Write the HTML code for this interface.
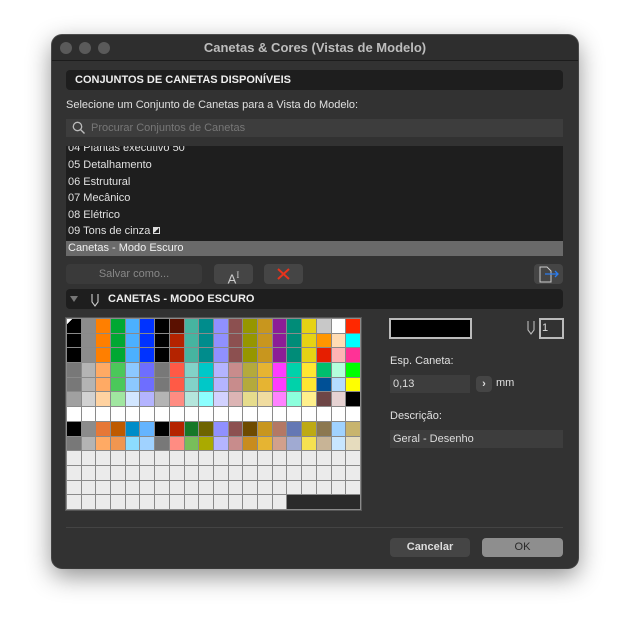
<!DOCTYPE html>
<html><head><meta charset="utf-8"><style>
*{box-sizing:border-box;margin:0;padding:0}
body{width:630px;height:637px;background:#fff;font-family:"Liberation Sans",sans-serif;position:relative;overflow:hidden}
.win{position:absolute;left:52px;top:35px;width:526px;height:533px;background:#323232;border-radius:10px;box-shadow:0 8px 25px rgba(0,0,0,.45),0 0 0 1px #555;overflow:hidden}
.tb{position:absolute;left:0;top:0;width:526px;height:26px;background:#2e2e2e;border-bottom:1px solid #1c1c1c;color:#bdbdbd;font-size:13px;font-weight:bold;text-align:center;line-height:25px}
.dot{position:absolute;top:7px;width:12px;height:12px;border-radius:50%;background:#5a5a5a}
.a{position:absolute}
.hdr{position:absolute;left:14px;width:497px;height:20px;background:#1e1e1e;border-radius:4px;color:#eee;font-size:11px;font-weight:bold;line-height:20px}
.t{position:absolute;color:#e0e0e0;font-size:11px;white-space:nowrap}
.in{position:absolute;background:#3d3d3d;color:#ddd;font-size:11px;line-height:18px;padding-left:3px}
.btn{position:absolute;background:#454545;border-radius:4px;color:#ddd;font-size:11px;text-align:center}
.grid{position:absolute;left:14px;top:283px;width:295px;height:192px;background:#8a8a8a;display:grid;grid-template-columns:repeat(20,1fr);grid-template-rows:repeat(13,1fr);gap:1px;padding:1px;outline:1px solid #555}
.grid i{display:block}
</style></head><body>
<div class="win">
<div class="tb">Canetas &amp; Cores (Vistas de Modelo)</div>
<div class="dot" style="left:8px"></div><div class="dot" style="left:27px"></div><div class="dot" style="left:46px"></div>
<div class="hdr" style="top:35px;padding-left:9px">CONJUNTOS DE CANETAS DISPONÍVEIS</div>
<div class="t" style="left:14px;top:64px">Selecione um Conjunto de Canetas para a Vista do Modelo:</div>
<div class="in" style="left:14px;top:84px;width:497px;height:18px;color:#777;padding-left:25px">Procurar Conjuntos de Canetas</div>
<svg class="a" style="left:20px;top:86px" width="14" height="14"><circle cx="5.5" cy="5.5" r="4.2" fill="none" stroke="#bbb" stroke-width="1.3"/><path d="M8.6 8.6L12.5 12.5" stroke="#bbb" stroke-width="1.4"/></svg>
<div class="a" style="left:14px;top:111px;width:497px;height:110px;background:#1e1e1e;overflow:hidden">
<div class="t" style="left:2px;top:-4px">04 Plantas executivo 50</div>
<div class="t" style="left:2px;top:13px">05 Detalhamento</div>
<div class="t" style="left:2px;top:30px">06 Estrutural</div>
<div class="t" style="left:2px;top:46px">07 Mecânico</div>
<div class="t" style="left:2px;top:63px">08 Elétrico</div>
<div class="t" style="left:2px;top:79px">09 Tons de cinza <span style="display:inline-block;width:7px;height:7px;border:1px solid #ddd;background:linear-gradient(135deg,#ddd 50%,#1e1e1e 50%);vertical-align:0"></span></div>
<div class="a" style="left:0;top:95px;width:497px;height:15px;background:#6a6a6a"></div>
<div class="t" style="left:2px;top:96px;color:#f0f0f0">Canetas - Modo Escuro</div>
</div>
<div class="btn" style="left:14px;top:229px;width:136px;height:20px;background:#3a3a3a;color:#888;line-height:20px">Salvar como...</div>
<div class="btn" style="left:162px;top:229px;width:39px;height:20px;font-size:13px;line-height:22px;color:#ccc">A<sup style="font-size:9px;font-family:'Liberation Serif'">I</sup></div>
<div class="btn" style="left:212px;top:229px;width:39px;height:20px"><svg width="39" height="20"><path d="M14 5L25 15M25 5L14 15" stroke="#e8331c" stroke-width="2"/></svg></div>
<div class="btn" style="left:482px;top:229px;width:29px;height:20px"><svg width="29" height="20"><path d="M6 3h7l4 4v11H6z" fill="none" stroke="#ccc" stroke-width="1"/><path d="M11 10h13M21 7l3 3-3 3" fill="none" stroke="#2a7cf0" stroke-width="1.3"/></svg></div>
<div class="hdr" style="top:254px;padding-left:42px">CANETAS - MODO ESCURO</div>
<svg class="a" style="left:18px;top:258px" width="40" height="14"><path d="M0 3h8L4 9z" fill="#777"/><path d="M22 1v8l3 4 3-4V1" fill="none" stroke="#ccc" stroke-width="1.1"/></svg>
<div class="grid">
<i style="background:linear-gradient(135deg,#fff 18%,#000 18%)"></i><i style="background:#8c8c8c"></i><i style="background:#ff7f00"></i><i style="background:#00a833"></i><i style="background:#4cb0ff"></i><i style="background:#0033ff"></i><i style="background:#000"></i><i style="background:#5a1000"></i><i style="background:#46b4a0"></i><i style="background:#008c8c"></i><i style="background:#9090ff"></i><i style="background:#8c5050"></i><i style="background:#969600"></i><i style="background:#c8961e"></i><i style="background:#8c1e96"></i><i style="background:#008c78"></i><i style="background:#e6d214"></i><i style="background:#c8c8c8"></i><i style="background:#fff"></i><i style="background:#ff2800"></i>
<i style="background:#000"></i><i style="background:#8c8c8c"></i><i style="background:#ff7f00"></i><i style="background:#00a833"></i><i style="background:#4cb0ff"></i><i style="background:#0033ff"></i><i style="background:#000"></i><i style="background:#b42300"></i><i style="background:#46b4a0"></i><i style="background:#008c8c"></i><i style="background:#9090ff"></i><i style="background:#8c5050"></i><i style="background:#969600"></i><i style="background:#c8961e"></i><i style="background:#8c1e96"></i><i style="background:#008c78"></i><i style="background:#e6d214"></i><i style="background:#ff9600"></i><i style="background:#ffdcb4"></i><i style="background:#00ffff"></i>
<i style="background:#000"></i><i style="background:#8c8c8c"></i><i style="background:#ff7f00"></i><i style="background:#00a833"></i><i style="background:#4cb0ff"></i><i style="background:#0033ff"></i><i style="background:#000"></i><i style="background:#b42300"></i><i style="background:#46b4a0"></i><i style="background:#008c8c"></i><i style="background:#9090ff"></i><i style="background:#8c5050"></i><i style="background:#969600"></i><i style="background:#c8961e"></i><i style="background:#8c1e96"></i><i style="background:#008c78"></i><i style="background:#e6d214"></i><i style="background:#e61e00"></i><i style="background:#ffb4b4"></i><i style="background:#ff3296"></i>
<i style="background:#787878"></i><i style="background:#b4b4b4"></i><i style="background:#ffaa64"></i><i style="background:#4bc85a"></i><i style="background:#8cc8ff"></i><i style="background:#6e6eff"></i><i style="background:#787878"></i><i style="background:#ff5a46"></i><i style="background:#82d2c8"></i><i style="background:#00c8c8"></i><i style="background:#b4b4ff"></i><i style="background:#c88c8c"></i><i style="background:#b4aa3c"></i><i style="background:#e6b432"></i><i style="background:#ff3cff"></i><i style="background:#00d2aa"></i><i style="background:#ffe632"></i><i style="background:#00be6e"></i><i style="background:#b4ffdc"></i><i style="background:#00ff00"></i>
<i style="background:#787878"></i><i style="background:#b4b4b4"></i><i style="background:#ffaa64"></i><i style="background:#4bc85a"></i><i style="background:#8cc8ff"></i><i style="background:#6e6eff"></i><i style="background:#787878"></i><i style="background:#ff5a46"></i><i style="background:#82d2c8"></i><i style="background:#00c8c8"></i><i style="background:#b4b4ff"></i><i style="background:#c88c8c"></i><i style="background:#b4aa3c"></i><i style="background:#e6b432"></i><i style="background:#ff3cff"></i><i style="background:#00d2aa"></i><i style="background:#ffe632"></i><i style="background:#005096"></i><i style="background:#b4dcff"></i><i style="background:#ffff00"></i>
<i style="background:#a0a0a0"></i><i style="background:#d2d2d2"></i><i style="background:#ffd2a0"></i><i style="background:#a0e6a0"></i><i style="background:#d2e6ff"></i><i style="background:#b4b4ff"></i><i style="background:#b4b4b4"></i><i style="background:#ff8c82"></i><i style="background:#b4e6dc"></i><i style="background:#8cffff"></i><i style="background:#d2d2ff"></i><i style="background:#dcb4b4"></i><i style="background:#e6dc8c"></i><i style="background:#f0dca0"></i><i style="background:#ff82ff"></i><i style="background:#8cffdc"></i><i style="background:#fff08c"></i><i style="background:#6e4646"></i><i style="background:#e6d2d2"></i><i style="background:#000"></i>
<i style="background:#fff"></i><i style="background:#fff"></i><i style="background:#fff"></i><i style="background:#fff"></i><i style="background:#fff"></i><i style="background:#fff"></i><i style="background:#fff"></i><i style="background:#fff"></i><i style="background:#fff"></i><i style="background:#fff"></i><i style="background:#fff"></i><i style="background:#fff"></i><i style="background:#fff"></i><i style="background:#fff"></i><i style="background:#fff"></i><i style="background:#fff"></i><i style="background:#fff"></i><i style="background:#fff"></i><i style="background:#fff"></i><i style="background:#fff"></i>
<i style="background:#000"></i><i style="background:#8c8c8c"></i><i style="background:#e67837"></i><i style="background:#be5a00"></i><i style="background:#008cc8"></i><i style="background:#64b4ff"></i><i style="background:#000"></i><i style="background:#b42300"></i><i style="background:#167828"></i><i style="background:#6e6400"></i><i style="background:#9090ff"></i><i style="background:#8c5050"></i><i style="background:#6e4b00"></i><i style="background:#c8961e"></i><i style="background:#b47864"></i><i style="background:#6478b4"></i><i style="background:#beaa14"></i><i style="background:#8c7850"></i><i style="background:#a0d2ff"></i><i style="background:#c8b46e"></i>
<i style="background:#787878"></i><i style="background:#b4b4b4"></i><i style="background:#ffaa64"></i><i style="background:#f09650"></i><i style="background:#8cdcff"></i><i style="background:#a0d2ff"></i><i style="background:#787878"></i><i style="background:#ff8c82"></i><i style="background:#78be5a"></i><i style="background:#aaaa00"></i><i style="background:#b4b4ff"></i><i style="background:#c88c8c"></i><i style="background:#c88c1e"></i><i style="background:#e6b432"></i><i style="background:#d2a08c"></i><i style="background:#a0aad2"></i><i style="background:#f5e150"></i><i style="background:#c8b496"></i><i style="background:#c8e6ff"></i><i style="background:#e6dcbe"></i>
<i style="background:#ebebeb"></i><i style="background:#ebebeb"></i><i style="background:#ebebeb"></i><i style="background:#ebebeb"></i><i style="background:#ebebeb"></i><i style="background:#ebebeb"></i><i style="background:#ebebeb"></i><i style="background:#ebebeb"></i><i style="background:#ebebeb"></i><i style="background:#ebebeb"></i><i style="background:#ebebeb"></i><i style="background:#ebebeb"></i><i style="background:#ebebeb"></i><i style="background:#ebebeb"></i><i style="background:#ebebeb"></i><i style="background:#ebebeb"></i><i style="background:#ebebeb"></i><i style="background:#ebebeb"></i><i style="background:#ebebeb"></i><i style="background:#ebebeb"></i>
<i style="background:#ebebeb"></i><i style="background:#ebebeb"></i><i style="background:#ebebeb"></i><i style="background:#ebebeb"></i><i style="background:#ebebeb"></i><i style="background:#ebebeb"></i><i style="background:#ebebeb"></i><i style="background:#ebebeb"></i><i style="background:#ebebeb"></i><i style="background:#ebebeb"></i><i style="background:#ebebeb"></i><i style="background:#ebebeb"></i><i style="background:#ebebeb"></i><i style="background:#ebebeb"></i><i style="background:#ebebeb"></i><i style="background:#ebebeb"></i><i style="background:#ebebeb"></i><i style="background:#ebebeb"></i><i style="background:#ebebeb"></i><i style="background:#ebebeb"></i>
<i style="background:#ebebeb"></i><i style="background:#ebebeb"></i><i style="background:#ebebeb"></i><i style="background:#ebebeb"></i><i style="background:#ebebeb"></i><i style="background:#ebebeb"></i><i style="background:#ebebeb"></i><i style="background:#ebebeb"></i><i style="background:#ebebeb"></i><i style="background:#ebebeb"></i><i style="background:#ebebeb"></i><i style="background:#ebebeb"></i><i style="background:#ebebeb"></i><i style="background:#ebebeb"></i><i style="background:#ebebeb"></i><i style="background:#ebebeb"></i><i style="background:#ebebeb"></i><i style="background:#ebebeb"></i><i style="background:#ebebeb"></i><i style="background:#ebebeb"></i>
<i style="background:#ebebeb"></i><i style="background:#ebebeb"></i><i style="background:#ebebeb"></i><i style="background:#ebebeb"></i><i style="background:#ebebeb"></i><i style="background:#ebebeb"></i><i style="background:#ebebeb"></i><i style="background:#ebebeb"></i><i style="background:#ebebeb"></i><i style="background:#ebebeb"></i><i style="background:#ebebeb"></i><i style="background:#ebebeb"></i><i style="background:#ebebeb"></i><i style="background:#ebebeb"></i><i style="background:#ebebeb"></i><i style="background:#2a2a2a;grid-column:span 5"></i>
</div>
<div class="a" style="left:337px;top:283px;width:83px;height:21px;background:#000;border:2px solid #bbb"></div>
<svg class="a" style="left:473px;top:285px" width="12" height="16"><path d="M3 1v9l3 4 3-4V1" fill="none" stroke="#bbb" stroke-width="1.1"/></svg>
<div class="a" style="left:487px;top:283px;width:25px;height:21px;border:2px solid #bbb;color:#ddd;font-size:11px;line-height:17px;padding-left:1px">1</div>
<div class="t" style="left:338px;top:320px">Esp. Caneta:</div>
<div class="in" style="left:338px;top:340px;width:80px;height:18px">0,13</div>
<div class="btn" style="left:424px;top:341px;width:16px;height:16px;line-height:16px;font-weight:bold">›</div>
<div class="t" style="left:444px;top:342px">mm</div>
<div class="t" style="left:338px;top:375px">Descrição:</div>
<div class="in" style="left:338px;top:395px;width:173px;height:18px">Geral - Desenho</div>
<div class="a" style="left:14px;top:492px;width:497px;height:1px;background:#444"></div>
<div class="btn" style="left:338px;top:503px;width:80px;height:19px;line-height:19px;font-weight:bold;color:#ddd">Cancelar</div>
<div class="btn" style="left:430px;top:503px;width:81px;height:19px;line-height:19px;background:#8e8e8e;color:#2a2a2a">OK</div>
</div>
</body></html>
